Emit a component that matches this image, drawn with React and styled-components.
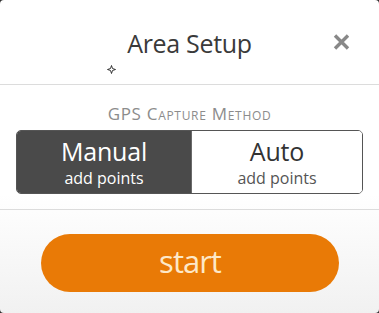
import React, { useState } from "react";
import styled, { createGlobalStyle } from "styled-components";

const Global = createGlobalStyle`
  html, body { margin: 0; padding: 0; background: #2f2f2f; }
  body { font-family: "Open Sans", "Noto Sans", sans-serif; }
  * { box-sizing: border-box; }
`;

const Dialog = styled.div`
  position: relative;
  width: 379px;
  height: 313px;
  background: linear-gradient(#ffffff 0%, #ffffff 62%, #f1f1f1 100%);
  border-radius: 4px;
  overflow: hidden;
  display: flex;
  flex-direction: column;
`;

const Header = styled.header`
  height: 85px;
  border-bottom: 1px solid #dcdcdc;
  display: grid;
  grid-template-columns: 1fr auto 1fr;
  align-items: center;
`;

const Title = styled.h1`
  grid-column: 2;
  margin: 0;
  font-size: 25px;
  font-weight: 400;
  color: #3a3a3a;
  letter-spacing: -0.3px;
  line-height: 34px;
  padding-top: 1px;
`;

const CloseButton = styled.button`
  grid-column: 3;
  justify-self: end;
  margin-right: 29px;
  width: 17px;
  height: 18px;
  padding: 0;
  border: 0;
  background: none;
  display: flex;
  align-items: center;
  justify-content: center;
  cursor: pointer;
`;

const Section = styled.section`
  padding: 19px 16px 15px;
  border-bottom: 1px solid #dcdcdc;
  display: flex;
  flex-direction: column;
  align-items: stretch;
  gap: 6px;
`;

const SectionLabel = styled.div`
  text-align: center;
  font-size: 17px;
  line-height: 20px;
  color: #8c8c8c;
  font-variant: small-caps;
  letter-spacing: 0.7px;
`;

const Segmented = styled.div`
  display: grid;
  grid-template-columns: 174px 1fr;
  height: 64px;
  border: 1.5px solid #555555;
  border-radius: 5px;
  overflow: hidden;
`;

const Segment = styled.button`
  border: 0;
  margin: 0;
  padding: 0;
  font-family: inherit;
  display: flex;
  flex-direction: column;
  align-items: center;
  justify-content: center;
  gap: 2px;
  background: ${(p) => (p.$active ? "#4a4a4a" : "#ffffff")};
  color: ${(p) => (p.$active ? "#ffffff" : "#333333")};
  border-left: ${(p) => (p.$first ? "0" : "1.5px solid #6a6a6a")};
  cursor: pointer;
`;

const SegTitle = styled.span`
  font-size: 25px;
  line-height: 29px;
  letter-spacing: -0.2px;
`;

const SegSub = styled.span`
  font-size: 16px;
  line-height: 20px;
  color: ${(p) => (p.$active ? "#ffffff" : "#555555")};
`;

const Footer = styled.footer`
  flex: 1;
  padding: 24px 40px 0 41px;
`;

const StartButton = styled.button`
  width: 100%;
  height: 58px;
  border: 0;
  border-radius: 29px;
  background: #e97a06;
  color: #fde8c8;
  font-family: inherit;
  font-size: 31px;
  font-weight: 400;
  letter-spacing: -1px;
  line-height: 1;
  padding-bottom: 4px;
  cursor: pointer;
`;

const Sparkle = styled.svg`
  position: absolute;
  left: 107px;
  top: 65px;
  pointer-events: none;
`;

const CloseIcon = () => (
  <svg width="17" height="18" viewBox="0 0 17 18" aria-hidden="true">
    <path d="M2 2.5 L15 15.5 M15 2.5 L2 15.5" stroke="#888888" strokeWidth="3.4" strokeLinecap="butt" />
  </svg>
);

export default function App() {
  const [mode, setMode] = useState("manual");
  return (
    <>
      <Global />
      <Dialog>
        <Header>
          <Title>Area Setup</Title>
          <CloseButton aria-label="Close">
            <CloseIcon />
          </CloseButton>
        </Header>
        <Section>
          <SectionLabel>GPS Capture Method</SectionLabel>
          <Segmented>
            <Segment $first $active={mode === "manual"} onClick={() => setMode("manual")}>
              <SegTitle>Manual</SegTitle>
              <SegSub $active={mode === "manual"}>add points</SegSub>
            </Segment>
            <Segment $active={mode === "auto"} onClick={() => setMode("auto")}>
              <SegTitle>Auto</SegTitle>
              <SegSub $active={mode === "auto"}>add points</SegSub>
            </Segment>
          </Segmented>
        </Section>
        <Footer>
          <StartButton>start</StartButton>
        </Footer>
        <Sparkle width="9" height="9" viewBox="0 0 9 9" aria-hidden="true">
          <path d="M4.5 0.5 L5.5 3.5 L8.5 4.5 L5.5 5.5 L4.5 8.5 L3.5 5.5 L0.5 4.5 L3.5 3.5 Z" fill="#fff" stroke="#222" strokeWidth="0.9" />
        </Sparkle>
      </Dialog>
    </>
  );
}
